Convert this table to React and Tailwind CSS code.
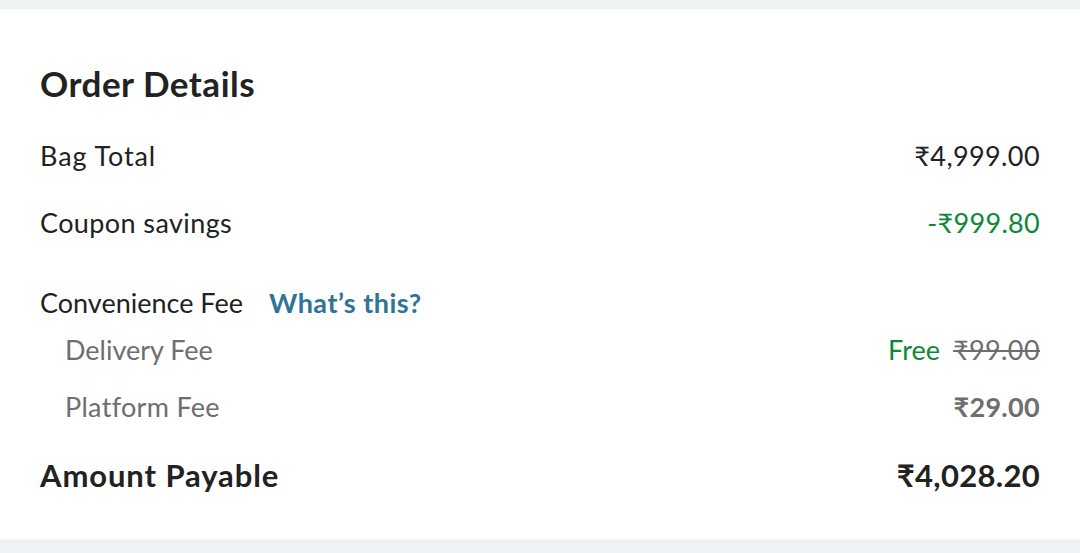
export default function App() {
  return (
    <div
      className="w-[1080px] h-[553px] bg-[#eef2f5] pt-[9px] pb-[14px] flex flex-col"
      style={{ fontFamily: '"Lato", "Noto Sans", sans-serif' }}
    >
      <div className="flex-1 bg-white px-10 text-[#222222]">
        {/* 헤더 */}
        <h2 className="text-[35px] font-bold leading-none tracking-[0.5px] mt-[57px]">Order Details</h2>

        <div className="flex justify-between items-center text-[27px] leading-none mt-[41px]">
          <span className="tracking-[0.9px]">Bag Total</span>
          <span className="tracking-[0.4px]">₹4,999.00</span>
        </div>

        <div className="flex justify-between items-center text-[27px] leading-none mt-[40px]">
          <span className="tracking-[0.4px]">Coupon savings</span>
          <span className="tracking-[0.3px] text-[#0b8a36]">-₹999.80</span>
        </div>

        {/* 편의 수수료 */}
        <div className="flex items-center text-[27px] leading-none mt-[53px]">
          <span>Convenience Fee</span>
          <button className="ml-[26px] font-bold tracking-[0.5px] text-[#2e7499]">What’s this?</button>
        </div>

        <div className="flex justify-between items-center text-[27px] leading-none mt-[20px] pl-[25px] text-[#6e6e6e]">
          <span>Delivery Fee</span>
          <span className="flex items-center gap-[13px]">
            <span className="text-[#0b8a36]">Free</span>
            <span className="line-through tracking-[0.4px]">₹99.00</span>
          </span>
        </div>

        <div className="flex justify-between items-center text-[27px] leading-none mt-[30px] pl-[25px] text-[#6e6e6e]">
          <span className="tracking-[0.3px]">Platform Fee</span>
          <span className="font-bold tracking-[0.3px]">₹29.00</span>
        </div>

        <div className="flex justify-between items-center text-[31px] font-bold leading-none mt-[40px]">
          <span className="tracking-[0.9px]">Amount Payable</span>
          <span className="tracking-[0.3px]">₹4,028.20</span>
        </div>
      </div>
    </div>
  );
}
